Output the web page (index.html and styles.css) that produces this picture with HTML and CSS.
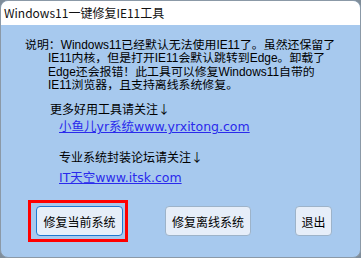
FILE: index.html
```html
<!DOCTYPE html>
<html lang="zh-CN">
<head>
  <meta charset="UTF-8">
  <meta name="viewport" content="width=device-width, initial-scale=1.0">
  <title>Windows11一键修复IE11工具</title>
  <link rel="stylesheet" href="styles.css">
</head>
<body>
  <div class="window">
    <div class="titlebar">Windows11一键修复IE11工具</div>

    <div class="content">
      <div class="desc">
        <span class="line first">说明：Windows11已经默认无法使用IE11了。虽然还保留了</span>
        <span class="line">IE11内核，但是打开IE11会默认跳转到Edge。卸载了</span>
        <span class="line">Edge还会报错！此工具可以修复Windows11自带的</span>
        <span class="line">IE11浏览器，且支持离线系统修复。</span>
      </div>

      <p class="follow">更多好用工具请关注↓</p>
      <a class="site" href="#">小鱼儿yr系统www.yrxitong.com</a>

      <p class="follow follow-2">专业系统封装论坛请关注↓</p>
      <a class="site site-2" href="#">IT天空www.itsk.com</a>

      <div class="actions">
        <span class="focus-frame">
          <button class="btn btn-focus">修复当前系统</button>
        </span>
        <button class="btn btn-offline">修复离线系统</button>
        <button class="btn btn-exit">退出</button>
      </div>
    </div>
  </div>
</body>
</html>
```

FILE: styles.css
```css
:root {
  --color-body: #a7c9ee;
  --color-border: #8b99a7;
  --color-btn: #e6eef9;
  --color-btn-border: #9db3c9;
  --color-focus: #1f78d1;
  --color-link: #2a2aec;
  --font-cjk: "Noto Sans CJK SC", sans-serif;
}
* { box-sizing: border-box; margin: 0; padding: 0; }
html, body { width: 361px; height: 258px; background: #7f8d9a; overflow: hidden; }
body { font-family: var(--font-cjk); font-size: 12px; color: #000; }

/* Window */
.window {
  width: 361px;
  height: 258px;
  border: 1px solid var(--color-border);
  border-radius: 8px;
  overflow: hidden;
  background: var(--color-body);
  display: flex;
  flex-direction: column;
}
.titlebar {
  height: 24px;
  line-height: 24px;
  padding-left: 3px;
  background: #fff;
  font-size: 12px;
  color: #111;
}

/* Content */
.content { display: flex; flex-direction: column; align-items: flex-start; padding: 14px 0 0 24px; }
.desc {
  display: flex;
  flex-direction: column;
  padding-left: 23px;
  font-family: "Liberation Sans", var(--font-cjk);
  font-size: 11.9px;
}
.desc .line {
  display: block;
  height: 13.33px;
  line-height: 13.33px;
  white-space: nowrap;
}
.desc .line.first { margin-left: -23px; }
.follow { line-height: 14px; margin: 10px 0 0 25px; }
.follow.follow-2 { margin: 16px 0 0 34px; }
.site {
  line-height: 14px;
  margin: 4px 0 0 34px;
  color: var(--color-link);
  font-family: "DejaVu Sans", var(--font-cjk);
  font-size: 12.5px;
  text-decoration: underline;
  white-space: nowrap;
}
.site.site-2 { margin-top: 7px; }

/* Buttons */
.actions { display: flex; align-items: center; margin: 15px 0 0 3px; }
.focus-frame {
  display: flex;
  border: 3px solid #ff0000;
  padding: 3px 2px 3px 5px;
}
.btn {
  height: 30px;
  background: var(--color-btn);
  border: 1px solid var(--color-btn-border);
  border-radius: 4px;
  font-family: var(--font-cjk);
  font-size: 12px;
  color: #000;
  cursor: pointer;
}
.btn-focus { width: 87px; border-color: var(--color-focus); }
.btn-offline { width: 86px; margin-left: 37px; }
.btn-exit { width: 37px; margin-left: 44px; }
```
